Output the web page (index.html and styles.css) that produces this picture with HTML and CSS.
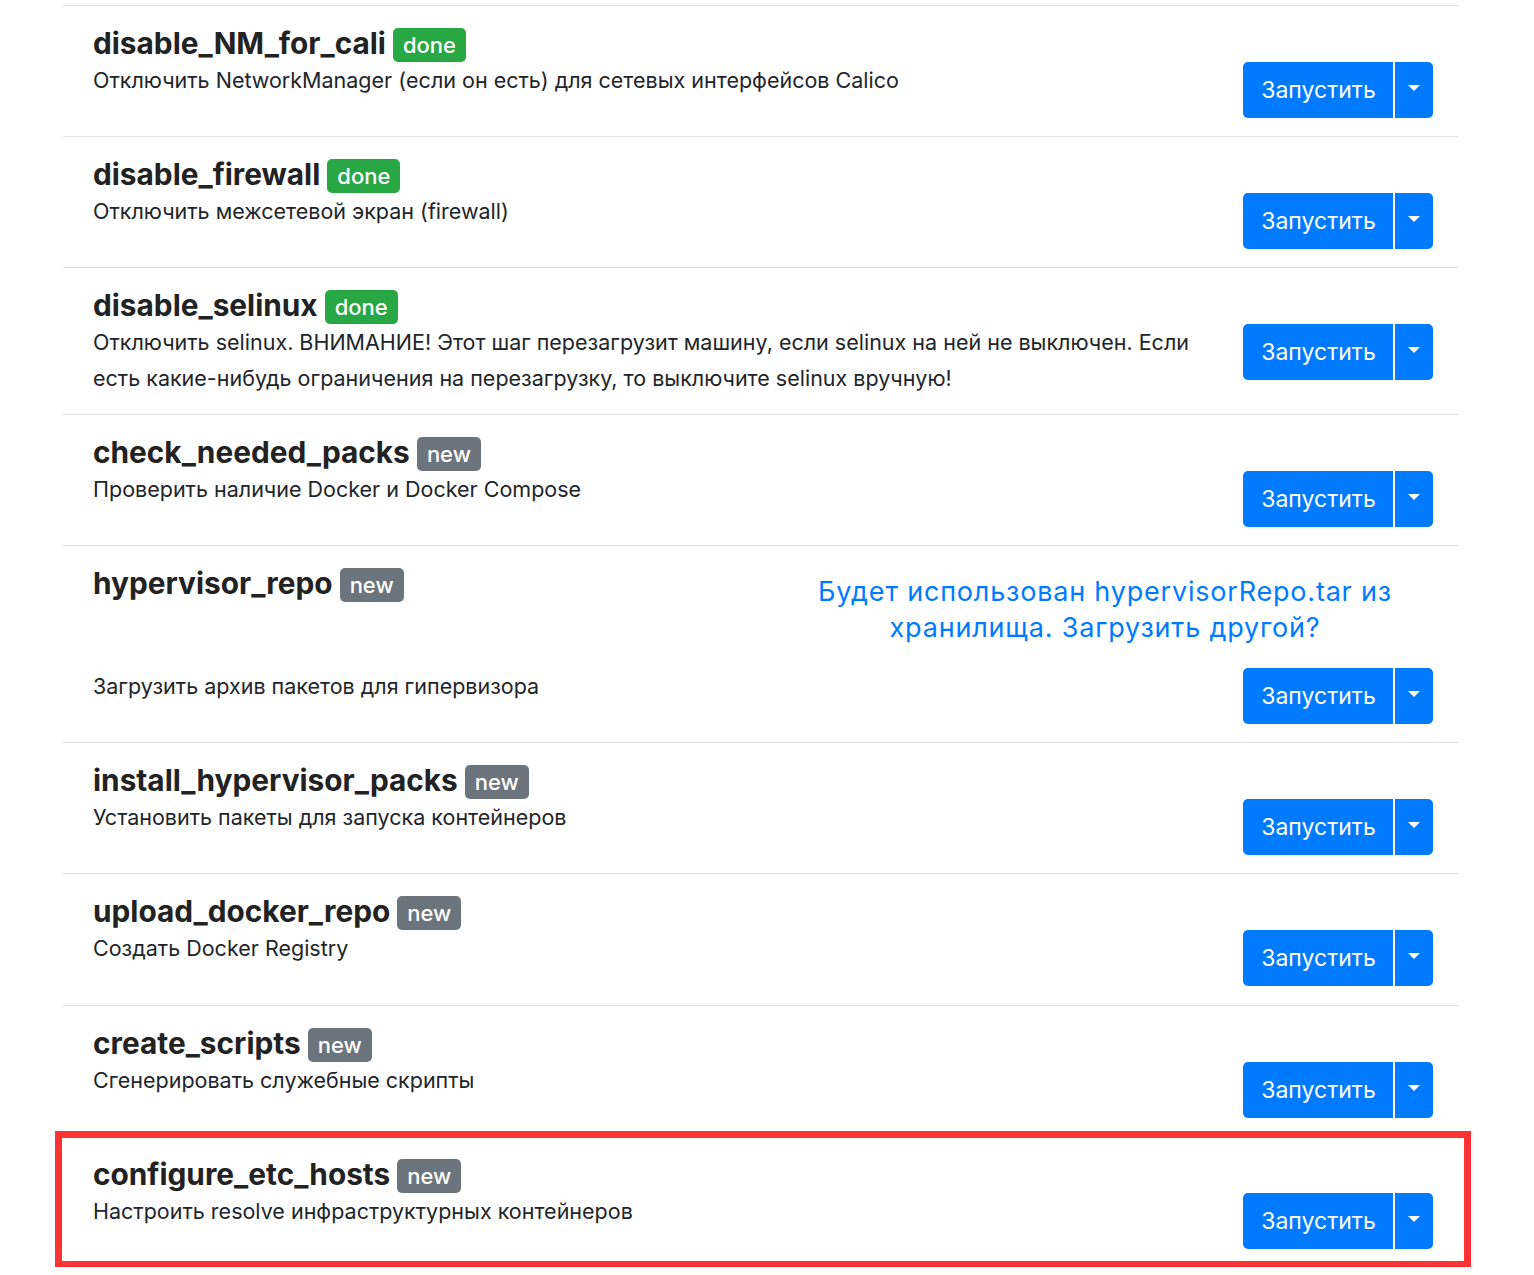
FILE: index.html
```html
<!DOCTYPE html>
<html lang="ru">
<head>
<meta charset="utf-8">
<title>Шаги установки</title>
<link rel="stylesheet" href="styles.css">
</head>
<body>
<div class="list">
  <div class="step">
    <div class="step-head"><h3 class="step-title">disable_NM_for_cali <span class="badge badge-done">done</span></h3></div>
    <div class="step-body">
      <p class="step-desc">Отключить NetworkManager (если он есть) для сетевых интерфейсов Calico</p>
      <div class="btn-group"><button class="btn-run">Запустить</button><button class="btn-drop"><span class="caret"></span></button></div>
    </div>
  </div>
  <div class="step">
    <div class="step-head"><h3 class="step-title">disable_firewall <span class="badge badge-done">done</span></h3></div>
    <div class="step-body">
      <p class="step-desc">Отключить межсетевой экран (firewall)</p>
      <div class="btn-group"><button class="btn-run">Запустить</button><button class="btn-drop"><span class="caret"></span></button></div>
    </div>
  </div>
  <div class="step">
    <div class="step-head"><h3 class="step-title">disable_selinux <span class="badge badge-done">done</span></h3></div>
    <div class="step-body">
      <p class="step-desc">Отключить selinux. ВНИМАНИЕ! Этот шаг перезагрузит машину, если selinux на ней не выключен. Если есть какие-нибудь ограничения на перезагрузку, то выключите selinux вручную!</p>
      <div class="btn-group"><button class="btn-run">Запустить</button><button class="btn-drop"><span class="caret"></span></button></div>
    </div>
  </div>
  <div class="step">
    <div class="step-head"><h3 class="step-title">check_needed_packs <span class="badge badge-new">new</span></h3></div>
    <div class="step-body">
      <p class="step-desc">Проверить наличие Docker и Docker Compose</p>
      <div class="btn-group"><button class="btn-run">Запустить</button><button class="btn-drop"><span class="caret"></span></button></div>
    </div>
  </div>
  <div class="step">
    <div class="step-head">
      <h3 class="step-title">hypervisor_repo <span class="badge badge-new">new</span></h3>
      <a class="repo-link" href="#">Будет использован hypervisorRepo.tar из хранилища. Загрузить другой?</a>
    </div>
    <div class="step-body">
      <p class="step-desc">Загрузить архив пакетов для гипервизора</p>
      <div class="btn-group"><button class="btn-run">Запустить</button><button class="btn-drop"><span class="caret"></span></button></div>
    </div>
  </div>
  <div class="step">
    <div class="step-head"><h3 class="step-title">install_hypervisor_packs <span class="badge badge-new">new</span></h3></div>
    <div class="step-body">
      <p class="step-desc">Установить пакеты для запуска контейнеров</p>
      <div class="btn-group"><button class="btn-run">Запустить</button><button class="btn-drop"><span class="caret"></span></button></div>
    </div>
  </div>
  <div class="step step-tall">
    <div class="step-head"><h3 class="step-title">upload_docker_repo <span class="badge badge-new">new</span></h3></div>
    <div class="step-body">
      <p class="step-desc">Создать Docker Registry</p>
      <div class="btn-group"><button class="btn-run">Запустить</button><button class="btn-drop"><span class="caret"></span></button></div>
    </div>
  </div>
  <div class="step">
    <div class="step-head"><h3 class="step-title">create_scripts <span class="badge badge-new">new</span></h3></div>
    <div class="step-body">
      <p class="step-desc">Сгенерировать служебные скрипты</p>
      <div class="btn-group"><button class="btn-run">Запустить</button><button class="btn-drop"><span class="caret"></span></button></div>
    </div>
  </div>
  <div class="step step-highlight">
    <div class="step-head"><h3 class="step-title">configure_etc_hosts <span class="badge badge-new">new</span></h3></div>
    <div class="step-body">
      <p class="step-desc">Настроить resolve инфраструктурных контейнеров</p>
      <div class="btn-group"><button class="btn-run">Запустить</button><button class="btn-drop"><span class="caret"></span></button></div>
    </div>
  </div>
</div>
</body>
</html>
```
FILE: styles.css
```css
* { box-sizing: border-box; }
html, body { margin: 0; padding: 0; background: #fff; }
body {
  font-family: Inter, "Noto Sans", "Liberation Sans", sans-serif;
  color: #212529;
}
.list {
  margin: 5px 76px 0 63px;
}
.step {
  border-top: 1px solid #dee2e6;
  padding: 18px 25px 18px 30px;
}
.step-tall { padding-bottom: 19px; }
.step-highlight { position: relative; }
.step-highlight::after {
  content: "";
  position: absolute;
  top: -6px;
  left: -8px;
  right: -13px;
  bottom: -1px;
  border: 7px solid #ff3333;
  pointer-events: none;
}
.step-head {
  display: flex;
  align-items: flex-start;
  justify-content: space-between;
}
.step-title {
  margin: 0;
  font-size: 29.8px;
  line-height: 38px;
  font-weight: 700;
  color: #222;
}
.badge {
  display: inline-block;
  vertical-align: 1px;
  font-size: 22px;
  font-weight: 500;
  line-height: 34px;
  height: 34px;
  padding: 0 10px;
  border-radius: 5px;
  color: #fff;
}
.badge-done { background: #28a745; }
.badge-new { background: #6c757d; }
.repo-link {
  display: block;
  width: 640px;
  margin: 10px 8px 22px 0;
  text-align: center;
  font-size: 27px;
  letter-spacing: 0.8px;
  line-height: 36px;
  color: #007bff;
  text-decoration: none;
}
.step-body {
  display: flex;
  align-items: flex-start;
  gap: 30px;
}
.step-desc {
  flex: 1;
  margin: 0;
  font-size: 21.5px;
  line-height: 36px;
}
.btn-group {
  display: flex;
  flex: none;
  height: 56px;
}
.btn-run, .btn-drop {
  border: none;
  background: #007bff;
  color: #fff;
  font-family: inherit;
  font-size: 23px;
  height: 56px;
  cursor: pointer;
}
.btn-run {
  width: 150px;
  border-radius: 5px 0 0 5px;
  padding: 0 0 0 1px;
}
.btn-drop {
  width: 38px;
  margin-left: 2px;
  border-radius: 0 5px 5px 0;
  display: flex;
  align-items: center;
  justify-content: center;
  padding: 0;
}
.caret {
  width: 0;
  height: 0;
  border-left: 6px solid transparent;
  border-right: 6px solid transparent;
  border-top: 6px solid #fff;
  margin-top: -4px;
}
```
